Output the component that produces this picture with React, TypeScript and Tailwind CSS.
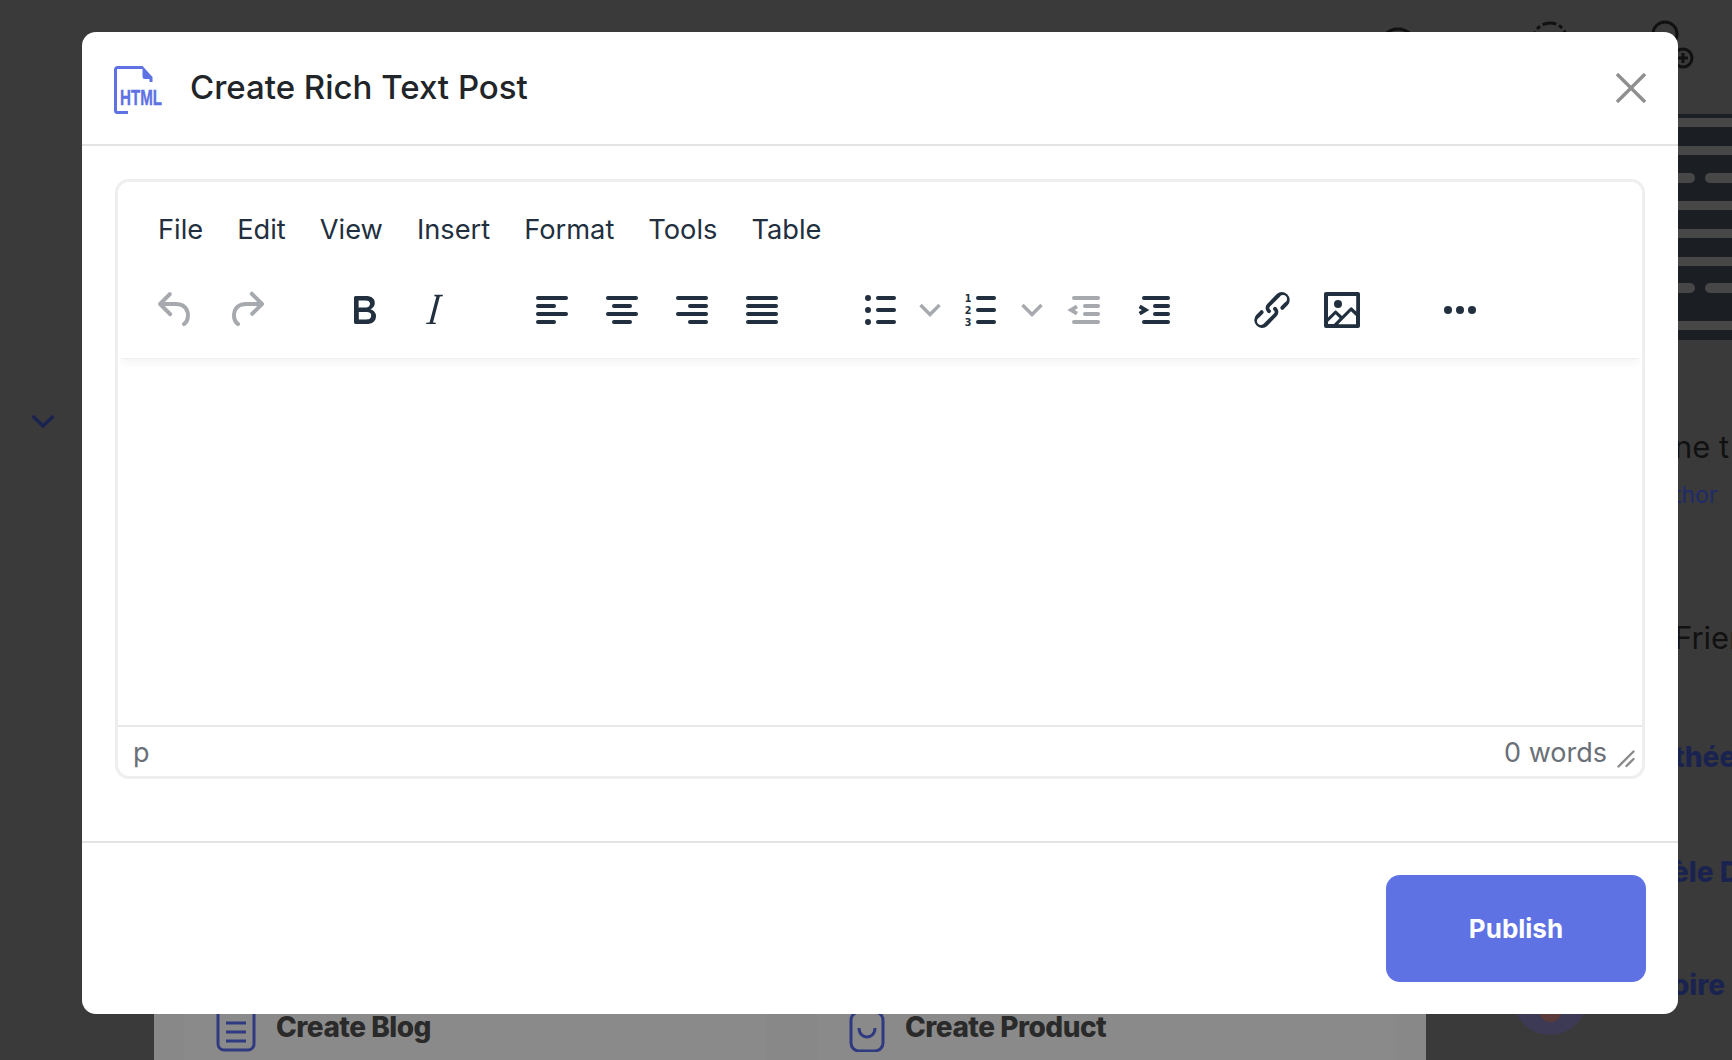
import type { ReactNode } from "react";

const INK = "#222f3e";
const MUTED = "#a6a9ad";

const menus = ["File", "Edit", "View", "Insert", "Format", "Tools", "Table"];

function Icon({ children, color = INK }: { children: ReactNode; color?: string }) {
  return (
    <svg viewBox="0 0 24 24" className="size-12" fill={color} stroke={color} strokeWidth={0}>
      {children}
    </svg>
  );
}

function Lines({ rows, color = INK }: { rows: [number, number, number][]; color?: string }) {
  return (
    <g stroke={color} strokeWidth={2} strokeLinecap="round">
      {rows.map(([x1, x2, y]) => (
        <line key={y} x1={x1} x2={x2} y1={y} y2={y} />
      ))}
    </g>
  );
}

function Btn({ children, className = "" }: { children: ReactNode; className?: string }) {
  return <div className={`flex h-12 w-[70px] shrink-0 items-center justify-center ${className}`}>{children}</div>;
}

function Chevron() {
  return (
    <div className="flex h-12 w-[50px] shrink-0 items-center justify-center">
      <svg viewBox="0 0 22 14" className="h-[14px] w-[22px]" fill="none" stroke={MUTED} strokeWidth={3.4}>
        <polyline points="1.5,2 11,11.5 20.5,2" />
      </svg>
    </div>
  );
}

function Toolbar() {
  return (
    <div className="flex h-12 items-center pl-[23px]">
      <Btn>
        <Icon color={MUTED}>
          <path d="M6.4 8H12c3.7 0 6.2 2 6.8 5.1.6 2.7-.4 5.6-2.3 6.8a1 1 0 0 1-1-1.8c1.1-.6 1.8-2.7 1.4-4.6-.5-2.1-2.1-3.5-4.9-3.5H6.4l3.3 3.3a1 1 0 1 1-1.4 1.4l-5-5a1 1 0 0 1 0-1.4l5-5a1 1 0 0 1 1.4 1.4L6.4 8z" />
        </Icon>
      </Btn>
      <Btn>
        <Icon color={MUTED}>
          <path d="M17.6 10H12c-2.8 0-4.4 1.4-4.9 3.5-.4 2 .3 4 1.4 4.6a1 1 0 1 1-1 1.8c-2-1.2-2.9-4.1-2.3-6.8.6-3 3-5.1 6.8-5.1h5.6l-3.3-3.3a1 1 0 1 1 1.4-1.4l5 5a1 1 0 0 1 0 1.4l-5 5a1 1 0 0 1-1.4-1.4l3.3-3.3z" />
        </Icon>
      </Btn>

      <Btn className="ml-12">
        <Icon>
          <path d="M7.8 19c-.3 0-.5 0-.6-.2l-.2-.5V5.7c0-.2 0-.4.2-.5l.6-.2h5c1.5 0 2.7.3 3.5 1 .7.6 1.1 1.4 1.1 2.5a3 3 0 0 1-.6 1.9c-.4.6-1 1-1.6 1.2.4.1.9.3 1.3.6s.8.7 1 1.2c.4.4.5 1 .5 1.6 0 1.3-.4 2.3-1.3 3-.8.7-2.1 1-3.8 1H7.8zm5-8.3c.6 0 1.2-.1 1.6-.5.4-.3.6-.7.6-1.3 0-1.1-.8-1.7-2.3-1.7H9.3v3.5h3.4zm.5 6c.7 0 1.3-.1 1.7-.4.4-.4.6-.9.6-1.5s-.2-1-.7-1.4c-.4-.3-1-.4-2-.4H9.4v3.8h4z" />
        </Icon>
      </Btn>
      <Btn>
        <Icon>
          <path d="M12.2 4.4H16.4V5.1L14.9 5.3 11.5 18.2 12.9 18.4V19H8.1V18.4L9.8 18.2 13.2 5.3 12.2 5.1z" />
        </Icon>
      </Btn>

      <Btn className="ml-12">
        <Icon>
          <Lines rows={[[5, 19, 6], [5, 13, 10], [5, 19, 14], [5, 13, 18]]} />
        </Icon>
      </Btn>
      <Btn>
        <Icon>
          <Lines rows={[[5, 19, 6], [8, 16, 10], [5, 19, 14], [8, 16, 18]]} />
        </Icon>
      </Btn>
      <Btn>
        <Icon>
          <Lines rows={[[5, 19, 6], [11, 19, 10], [5, 19, 14], [11, 19, 18]]} />
        </Icon>
      </Btn>
      <Btn>
        <Icon>
          <Lines rows={[[5, 19, 6], [5, 19, 10], [5, 19, 14], [5, 19, 18]]} />
        </Icon>
      </Btn>

      <Btn className="ml-12">
        <Icon>
          <Lines rows={[[11, 19, 6], [11, 19, 12], [11, 19, 18]]} />
          <circle cx={6} cy={6} r={1.5} />
          <circle cx={6} cy={12} r={1.5} />
          <circle cx={6} cy={18} r={1.5} />
        </Icon>
      </Btn>
      <div className="-ml-2.5">
        <Chevron />
      </div>
      <div className="-ml-2.5 -mr-2">
        <Btn>
          <Icon>
            <Lines rows={[[11, 19, 6], [11, 19, 12], [11, 19, 18]]} />
            <g className="[font-family:'DejaVu_Sans',sans-serif]" fontSize={4.8} fontWeight={700} textAnchor="middle">
              <text x={6} y={7.8}>1</text>
              <text x={6} y={13.8}>2</text>
              <text x={6} y={19.8}>3</text>
            </g>
          </Icon>
        </Btn>
      </div>
      <Chevron />
      <div className="-ml-2">
        <Btn>
          <Icon color={MUTED}>
            <Lines color={MUTED} rows={[[7, 19, 6], [12.5, 19, 10], [12.5, 19, 14], [7, 19, 18]]} />
            <polyline points="8.5,10.2 5.5,12 8.5,13.8" fill="none" stroke={MUTED} strokeWidth={1.9} />
          </Icon>
        </Btn>
      </div>
      <Btn>
        <Icon>
          <Lines rows={[[7, 19, 6], [12.5, 19, 10], [12.5, 19, 14], [7, 19, 18]]} />
          <polyline points="4.8,10.2 7.8,12 4.8,13.8" fill="none" stroke={INK} strokeWidth={1.9} />
        </Icon>
      </Btn>

      <Btn className="ml-12">
        <Icon>
          <path d="M6.2 12.3a1 1 0 0 1 1.4 1.4l-2 2a2 2 0 1 0 2.6 2.8l4.8-4.8a1 1 0 0 0 0-1.4 1 1 0 1 1 1.4-1.3 2.9 2.9 0 0 1 0 4L9.6 20a3.9 3.9 0 0 1-5.5-5.5l2-2zm11.6-.6a1 1 0 0 1-1.4-1.4l2-2a2 2 0 1 0-2.6-2.8L11 10.3a1 1 0 0 0 0 1.4A1 1 0 1 1 9.6 13a2.9 2.9 0 0 1 0-4L14.4 4a3.9 3.9 0 0 1 5.5 5.5l-2 2z" />
        </Icon>
      </Btn>
      <Btn>
        <Icon>
          <path
            fillRule="evenodd"
            d="M5 15.7l3.3-3.2c.3-.3.7-.3 1 0L12 15l4.1-4.1c.3-.4.8-.4 1 0l2 1.9V5H5v10.7zM5 18V19h3l2.8-2.9-2-2L5 17.9zm14-3l-2.5-2.4-6.4 6.5H19v-4zM4 3h16c.6 0 1 .4 1 1v16c0 .6-.4 1-1 1H4a1 1 0 0 1-1-1V4c0-.6.4-1 1-1zm6 8a2 2 0 1 1 0-4 2 2 0 0 1 0 4z"
          />
        </Icon>
      </Btn>

      <Btn className="ml-12">
        <Icon>
          <circle cx={6} cy={12} r={2} />
          <circle cx={12} cy={12} r={2} />
          <circle cx={18} cy={12} r={2} />
        </Icon>
      </Btn>
    </div>
  );
}

function Editor() {
  return (
    <div className="flex h-[600px] flex-col overflow-hidden rounded-[14px] border-[3px] border-[#eeeeee] bg-white [font-family:Inter,sans-serif]">
      <div className="relative flex h-[176px] shrink-0 flex-col rounded-t-[10px] bg-white shadow-[0_2px_2px_-2px_rgba(34,47,62,0.12),0_8px_8px_-4px_rgba(34,47,62,0.06)]">
        <div className="flex gap-[34px] pl-[40px] pt-[28px] text-[27.25px] leading-[40px] text-[#222f3e]">
          {menus.map((m) => (
            <span key={m}>{m}</span>
          ))}
        </div>
        <div className="mt-[36px]">
          <Toolbar />
        </div>
      </div>
      <div className="flex-1 bg-white" />
      <div className="flex h-[51px] shrink-0 items-center justify-between border-t-2 border-[#e8e8e8] pl-[15px] pr-[7px] pt-[3px] text-[27px] text-[#6a7077]">
        <span>p</span>
        <div className="flex items-center gap-[10px]">
          <span>0 words</span>
          <svg viewBox="0 0 18 18" className="mt-3 size-[18px]" stroke="#8a8a8a" strokeWidth={2.4} strokeLinecap="round">
            <line x1="1.5" y1="16.5" x2="16.5" y2="1.5" />
            <line x1="9.5" y1="16" x2="16.5" y2="9" />
          </svg>
        </div>
      </div>
    </div>
  );
}

function HtmlIcon() {
  return (
    <svg viewBox="0 0 48 48" className="mt-1 size-12 shrink-0">
      <path d="M14 46.5H3.5a2 2 0 0 1-2-2V3.5a2 2 0 0 1 2-2H29" fill="none" stroke="#5e72e4" strokeWidth={3} />
      <path d="M28.5 0l10 11v5h-3v-3H31a2.6 2.6 0 0 1-2.5-2.6z" fill="#5e72e4" />
      <text
        x="6"
        y="39"
        fill="#5e72e4"
        stroke="#5e72e4"
        strokeWidth="0.4"
        fontSize="22"
        fontWeight="700"
        textLength="42"
        lengthAdjust="spacingAndGlyphs"
        className="[font-family:'Liberation_Sans',sans-serif]"
      >
        HTML
      </text>
    </svg>
  );
}

function Modal() {
  return (
    <div className="absolute left-[82px] top-[32px] flex h-[982px] w-[1596px] flex-col rounded-[14px] bg-white">
      <div className="flex h-[114px] shrink-0 items-center border-b-2 border-[#e4e4e4] px-[32px]">
        <HtmlIcon />
        <h1 className="ml-[28px] flex-1 text-[33px] font-medium text-[#212529] [font-family:Inter,sans-serif]">
          Create Rich Text Post
        </h1>
        <svg viewBox="0 0 30 30" className="size-[30px]" stroke="#8f8f8f" strokeWidth={3.4}>
          <line x1="1" y1="1" x2="29" y2="29" />
          <line x1="29" y1="1" x2="1" y2="29" />
        </svg>
      </div>
      <div className="h-[697px] shrink-0 border-b-2 border-[#e4e4e4] px-[33px] pt-[33px]">
        <Editor />
      </div>
      <div className="flex flex-1 items-start justify-end pr-[32px] pt-[32px]">
        <button className="h-[107px] w-[260px] rounded-[14px] bg-[#5e72e4] text-[26px] font-bold text-white [font-family:Inter,sans-serif]">
          Publish
        </button>
      </div>
    </div>
  );
}

function TopIcons() {
  return (
    <div className="flex h-[114px] shrink-0 pl-[1378px] pt-[20px]">
      <svg viewBox="0 0 40 40" className="mt-[7px] size-10" fill="none" stroke="#111" strokeWidth={3}>
        <circle cx="20" cy="20" r="18" />
      </svg>
      <svg viewBox="0 0 40 40" className="ml-[112px] size-10" fill="none" stroke="#111" strokeWidth={3}>
        <circle cx="20" cy="20" r="17" strokeDasharray="14 3 4 3" />
      </svg>
      <svg viewBox="0 0 50 60" className="ml-[78px] h-[60px] w-[50px]" fill="none" stroke="#111" strokeWidth={3}>
        <circle cx="17" cy="14" r="12" />
        <circle cx="35" cy="38" r="9" />
        <line x1="35" y1="33" x2="35" y2="43" />
        <line x1="30" y1="38" x2="40" y2="38" />
      </svg>
    </div>
  );
}

function Pills({ className }: { className: string }) {
  return (
    <div className={`flex gap-[10px] ${className}`}>
      <div className="-ml-[19px] h-[10px] w-[40px] shrink-0 rounded-full bg-[#474747]" />
      <div className="h-[10px] w-[60px] shrink-0 rounded-l-full bg-[#474747]" />
    </div>
  );
}

function DarkStrip() {
  const band = "h-[9px] bg-[#474747]";
  return (
    <div className="flex h-[226px] flex-col gap-[19px] overflow-hidden bg-[#1b1f24] pt-[4px]">
      <div className={band} />
      <div className={band} />
      <Pills className="-my-px" />
      <div className={band} />
      <div className={band} />
      <div className={band} />
      <Pills className="-mt-[2px]" />
      <div className={`${band} mt-[9px]`} />
    </div>
  );
}

function SideColumn() {
  return (
    <div className="flex w-[306px] shrink-0 flex-col overflow-hidden whitespace-nowrap pl-[248px] [font-family:Inter,sans-serif]">
      <DarkStrip />
      <div className="mt-[88px] text-[31px] leading-[38px] text-[#111]">ne t</div>
      <div className="mt-[14px] text-[23px] leading-[30px] text-[#1f2b6a]">thor</div>
      <div className="mt-[109px] text-[31px] leading-[38px] text-[#111]">Frien</div>
      <div className="mt-[81px] text-[28px] font-extrabold leading-[38px] text-[#1a2350]">thée</div>
      <div className="-ml-[2px] mt-[77px] text-[28px] font-extrabold leading-[38px] text-[#1a2350]">èle D</div>
      <div className="-ml-[2px] mt-[75px] text-[28px] font-extrabold leading-[38px] text-[#1a2350]">oire</div>
      <div className="-ml-[161px] -mt-[43px] flex size-[74px] shrink-0 justify-center rounded-full bg-[#3d3a55] pt-[39px]">
        <div className="h-[22px] w-[23px] rounded-b-full bg-[#5a3a3a]" />
      </div>
    </div>
  );
}

function CreateCard({ label, children, className }: { label: string; children: ReactNode; className: string }) {
  return (
    <div className={`flex h-[60px] items-start gap-[20px] bg-[#8a8a8a] ${className}`}>
      {children}
      <span className="mt-[7px] text-[28px] font-extrabold leading-[40px] tracking-[-0.5px] text-[#2a2a2a] [font-family:Inter,sans-serif]">
        {label}
      </span>
    </div>
  );
}

export default function App() {
  return (
    <div className="relative flex h-[1060px] w-[1732px] flex-col overflow-hidden bg-[#3a3a3a]">
      <TopIcons />
      <div className="flex flex-1">
        <div className="w-[154px] shrink-0 pl-[31px] pt-[300px]">
          <svg viewBox="0 0 24 14" className="h-[14px] w-[24px]" fill="none" stroke="#1a2350" strokeWidth={3.4}>
            <polyline points="1.5,2 12,12 22.5,2" />
          </svg>
        </div>
        <div className="flex w-[1272px] shrink-0 flex-col justify-end">
          <div className="flex h-[60px] gap-[52px] bg-[#888888] pl-[30px]">
            <CreateCard label="Create Blog" className="w-[581px] pl-[32px]">
              <svg viewBox="0 0 40 52" className="h-[52px] w-[40px]" fill="none" stroke="#2f3a80" strokeWidth={3}>
                <rect x="2" y="2" width="36" height="48" rx="6" />
                <line x1="10" y1="23" x2="30" y2="23" />
                <line x1="10" y1="32" x2="30" y2="32" />
                <line x1="10" y1="41" x2="30" y2="41" />
              </svg>
            </CreateCard>
            <CreateCard label="Create Product" className="w-[579px] pl-[32px]">
              <svg viewBox="0 0 36 52" className="h-[52px] w-[36px]" fill="none" stroke="#2f3a80" strokeWidth={3}>
                <rect x="2" y="12" width="32" height="39" rx="8" />
                <path d="M10 12V3h16v9M10 28c0 12 16 12 16 0" />
              </svg>
            </CreateCard>
          </div>
        </div>
        <SideColumn />
      </div>
      <Modal />
    </div>
  );
}
